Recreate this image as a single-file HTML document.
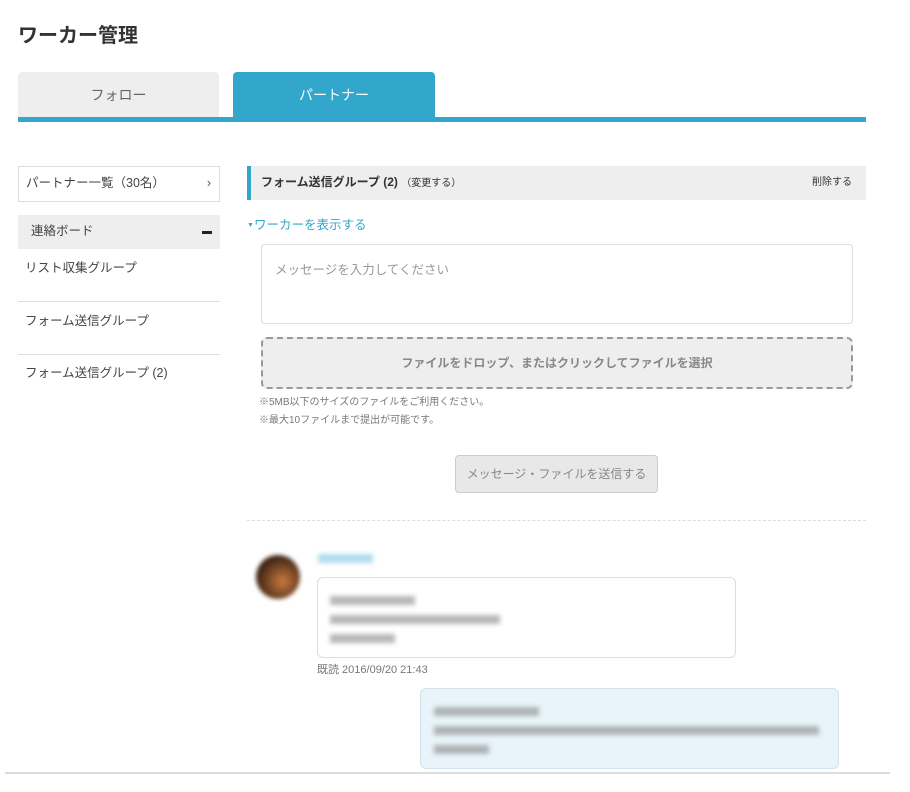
<!DOCTYPE html>
<html><head><meta charset="utf-8"><style>
*{box-sizing:border-box;margin:0;padding:0}
body{width:910px;height:792px;background:#fff;font-family:"Liberation Sans","Noto Sans CJK JP",sans-serif;color:#333;position:relative;overflow:hidden}
.a{position:absolute}
.bar{position:absolute;height:9px;background:#888;filter:blur(2.5px);opacity:.6}
</style></head><body>
<div class="a" style="left:18px;top:19px;font-size:20px;font-weight:bold;color:#333">ワーカー管理</div>
<div class="a" style="left:18px;top:72px;width:201px;height:46px;background:#eee;border-radius:4px 4px 0 0;text-align:center;line-height:46px;font-size:14px;color:#666">フォロー</div>
<div class="a" style="left:233px;top:72px;width:202px;height:46px;background:#33a6cc;border-radius:4px 4px 0 0;text-align:center;line-height:46px;font-size:14px;color:#fff">パートナー</div>
<div class="a" style="left:18px;top:117px;width:848px;height:5px;background:#33a6cc"></div>

<div class="a" style="left:18px;top:166px;width:202px;height:36px;border:1px solid #ddd;font-size:12.5px;line-height:33px;padding-left:7px;color:#444">パートナー一覧（30名）<span style="position:absolute;right:8px;color:#555">›</span></div>
<div class="a" style="left:18px;top:215px;width:202px;height:34px;background:#eee;font-size:12.5px;line-height:32px;padding-left:13px;color:#444">連絡ボード<span style="position:absolute;right:8px;top:16px;width:10px;height:3px;background:#222"></span></div>
<div class="a" style="left:25px;top:257px;font-size:12.5px;color:#444">リスト収集グループ</div>
<div class="a" style="left:18px;top:301px;width:202px;height:1px;background:#ddd"></div>
<div class="a" style="left:25px;top:310px;font-size:12.5px;color:#444">フォーム送信グループ</div>
<div class="a" style="left:18px;top:354px;width:202px;height:1px;background:#ddd"></div>
<div class="a" style="left:25px;top:362px;font-size:12.5px;color:#444">フォーム送信グループ (2)</div>

<div class="a" style="left:247px;top:166px;width:619px;height:34px;background:#eee;border-left:4px solid #33a6cc;font-size:12px;line-height:33px;padding-left:10px"><b>フォーム送信グループ (2)</b> <span style="font-size:10px">（変更する）</span><span style="position:absolute;right:14px;font-size:10px">削除する</span></div>
<div class="a" style="left:247px;top:214px;font-size:12.5px;color:#33a6cc"><span style="font-size:7px;vertical-align:2px">▼</span>ワーカーを表示する</div>
<div class="a" style="left:261px;top:244px;width:592px;height:80px;border:1px solid #ddd;border-radius:4px;padding:14px 13px;font-size:12.5px;color:#999">メッセージを入力してください</div>
<div class="a" style="left:261px;top:337px;width:592px;height:52px;border:2px dashed #999;border-radius:6px;background:#eee;text-align:center;line-height:48px;font-size:12px;font-weight:bold;color:#888">ファイルをドロップ、またはクリックしてファイルを選択</div>
<div class="a" style="left:259px;top:394px;font-size:10px;color:#777;line-height:18px">※5MB以下のサイズのファイルをご利用ください。<br>※最大10ファイルまで提出が可能です。</div>
<div class="a" style="left:455px;top:455px;width:203px;height:38px;border:1px solid #ccc;border-radius:4px;background:#e8e8e8;text-align:center;line-height:36px;font-size:12px;color:#888">メッセージ・ファイルを送信する</div>
<div class="a" style="left:247px;top:520px;width:619px;border-top:1px dashed #ddd"></div>

<div class="a" style="left:256px;top:555px;width:44px;height:44px;border-radius:50%;background:radial-gradient(circle at 60% 60%,#c87a40,#3a2010 70%);filter:blur(2px)"></div>
<div class="bar" style="left:318px;top:554px;width:55px;background:#7cc4e4"></div>
<div class="a" style="left:317px;top:577px;width:419px;height:81px;border:1px solid #ddd;border-radius:6px"></div>
<div class="bar" style="left:330px;top:596px;width:85px"></div>
<div class="bar" style="left:330px;top:615px;width:170px"></div>
<div class="bar" style="left:330px;top:634px;width:65px"></div>
<div class="a" style="left:317px;top:661px;font-size:11px;color:#777">既読 2016/09/20 21:43</div>
<div class="a" style="left:420px;top:688px;width:419px;height:81px;border:1px solid #cfe3ec;border-radius:6px;background:#e8f4fa"></div>
<div class="bar" style="left:434px;top:707px;width:105px"></div>
<div class="bar" style="left:434px;top:726px;width:385px"></div>
<div class="bar" style="left:434px;top:745px;width:55px"></div>
<div class="a" style="left:5px;top:772px;width:885px;height:2px;background:#ddd"></div>
</body></html>
